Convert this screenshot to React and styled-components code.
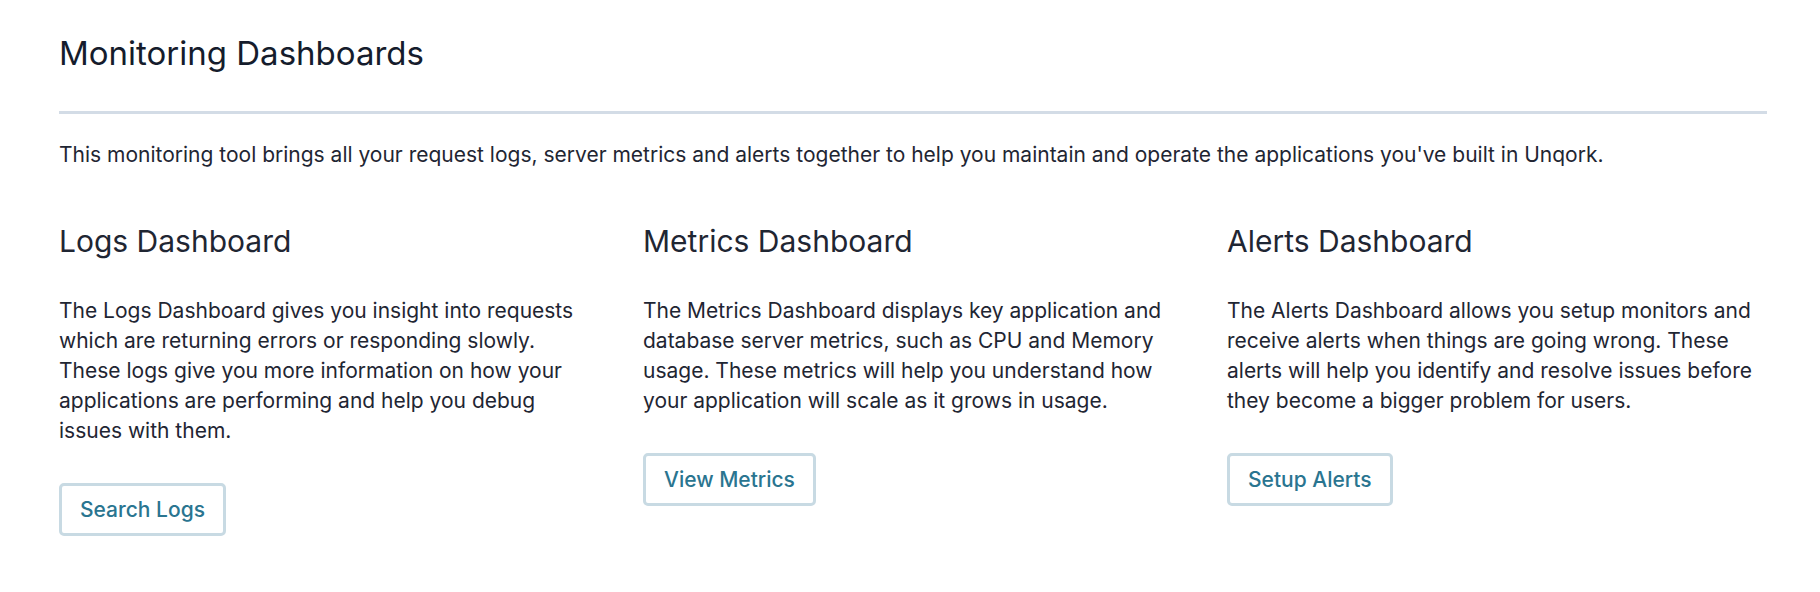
import React from 'react';
import styled, { createGlobalStyle } from 'styled-components';

const GlobalStyle = createGlobalStyle`
  body {
    margin: 0;
    background: #ffffff;
    font-family: Inter, "Noto Sans", sans-serif;
    color: #1f2633;
  }
`;

const Page = styled.main`
  padding: 33px 53px 40px 59px;
`;

const Title = styled.h1`
  margin: 0;
  font-size: 33px;
  font-weight: 400;
  line-height: 40px;
  color: #151c2c;
`;

const Rule = styled.hr`
  margin: 38px 0 0;
  border: 0;
  height: 3px;
  background: #d3dce6;
`;

const Intro = styled.p`
  margin: 26px 0 0;
  font-size: 21px;
  line-height: 30px;
  color: #1f2633;
`;

const Columns = styled.div`
  display: grid;
  grid-template-columns: repeat(3, 1fr);
  column-gap: 44px;
  margin-top: 53px;
`;

const Card = styled.section`
  display: flex;
  flex-direction: column;
  align-items: flex-start;
`;

const CardTitle = styled.h2`
  margin: 0;
  font-size: 30px;
  font-weight: 400;
  line-height: 36px;
  color: #1f2633;
`;

const CardText = styled.p`
  margin: 37px 0 0;
  font-size: 21px;
  line-height: 30px;
  color: #1f2633;
`;

const Button = styled.button`
  margin-top: 37px;
  height: 53px;
  display: inline-flex;
  align-items: center;
  padding: 0 18px;
  border: 3px solid #c8dae3;
  border-radius: 5px;
  background: #ffffff;
  font-family: inherit;
  font-size: 21px;
  font-weight: 500;
  color: #2a7590;
  cursor: pointer;
`;

const dashboards = [
  {
    title: 'Logs Dashboard',
    text: 'The Logs Dashboard gives you insight into requests which are returning errors or responding slowly. These logs give you more information on how your applications are performing and help you debug issues with them.',
    action: 'Search Logs',
  },
  {
    title: 'Metrics Dashboard',
    text: 'The Metrics Dashboard displays key application and database server metrics, such as CPU and Memory usage. These metrics will help you understand how your application will scale as it grows in usage.',
    action: 'View Metrics',
  },
  {
    title: 'Alerts Dashboard',
    text: 'The Alerts Dashboard allows you setup monitors and receive alerts when things are going wrong. These alerts will help you identify and resolve issues before they become a bigger problem for users.',
    action: 'Setup Alerts',
  },
];

export default function App() {
  return (
    <>
      <GlobalStyle />
      <Page>
        <Title>Monitoring Dashboards</Title>
        <Rule />
        <Intro>
          This monitoring tool brings all your request logs, server metrics and alerts together to help you maintain and operate the applications you've built in Unqork.
        </Intro>
        <Columns>
          {dashboards.map((d) => (
            <Card key={d.title}>
              <CardTitle>{d.title}</CardTitle>
              <CardText>{d.text}</CardText>
              <Button>{d.action}</Button>
            </Card>
          ))}
        </Columns>
      </Page>
    </>
  );
}
